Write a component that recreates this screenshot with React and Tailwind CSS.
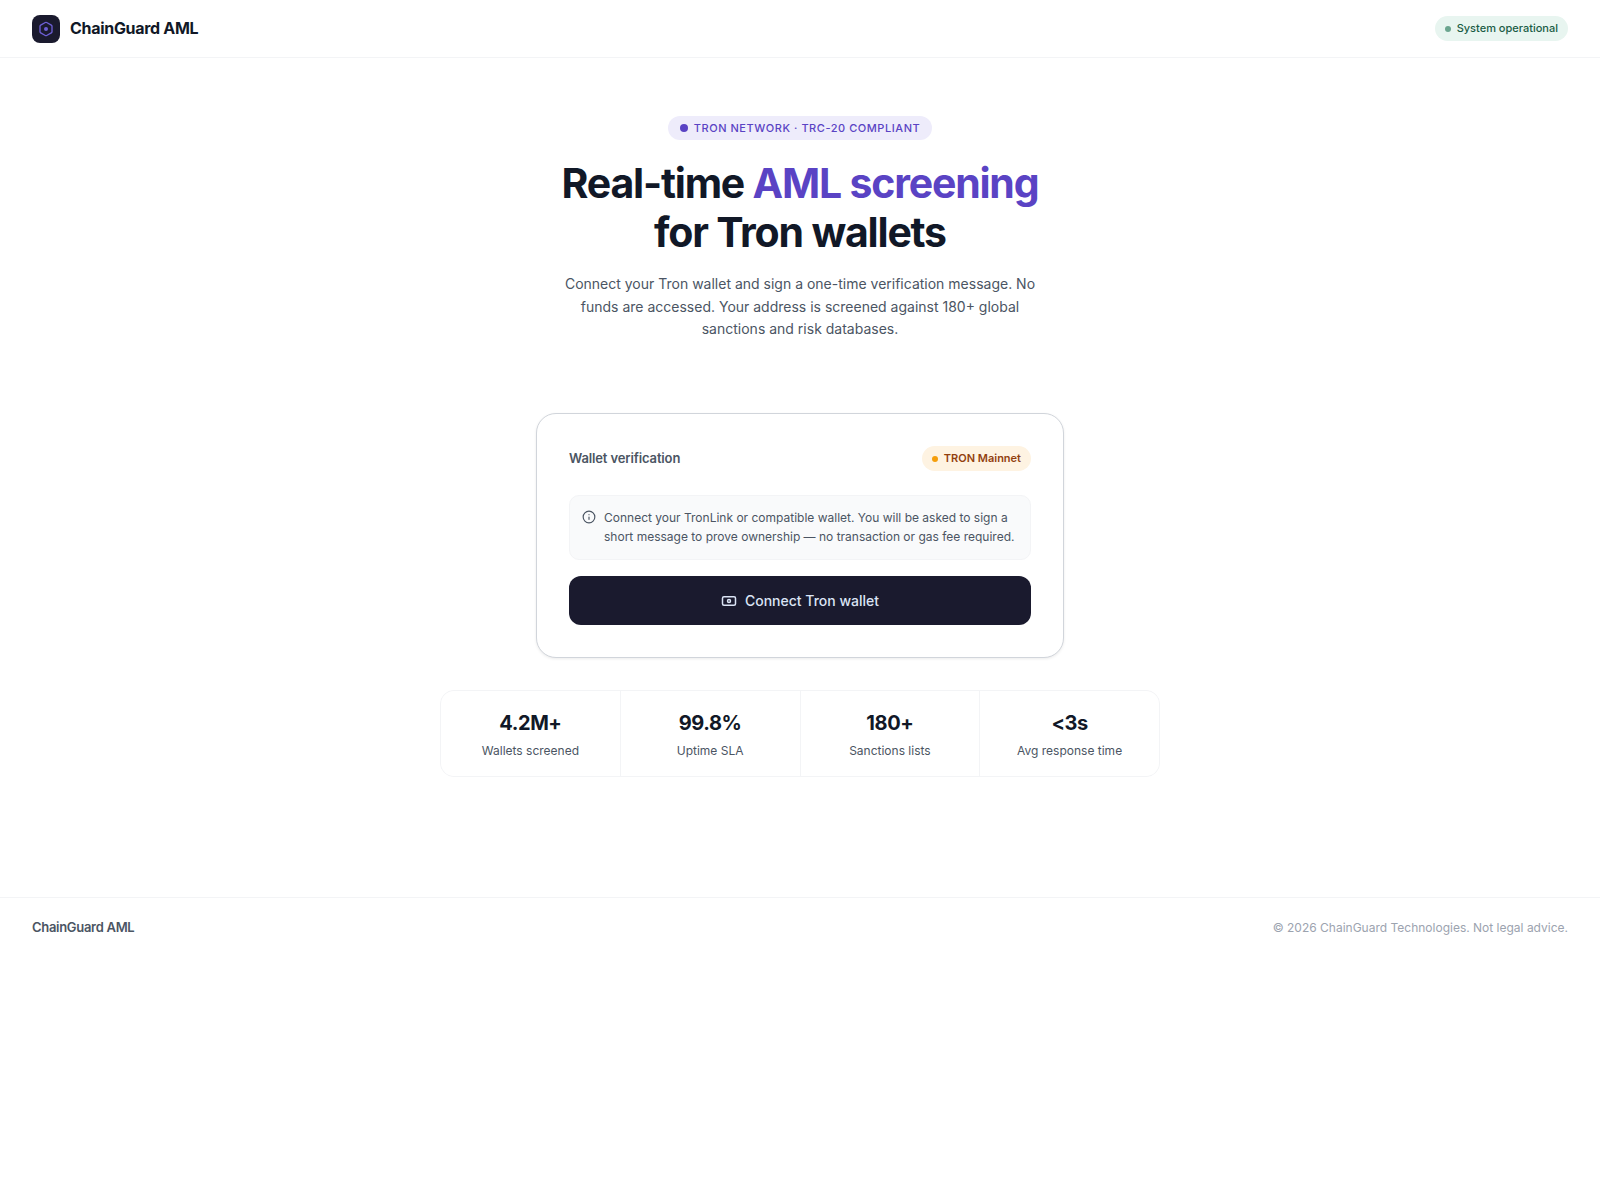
import { Info } from "lucide-react";

const STATS = [
  { value: "4.2M+", label: "Wallets screened" },
  { value: "99.8%", label: "Uptime SLA" },
  { value: "180+", label: "Sanctions lists" },
  { value: "<3s", label: "Avg response time" },
];

function LogoIcon() {
  return (
    <svg width="16" height="16" viewBox="0 0 24 24" fill="none" stroke="#6d5fd6" strokeWidth="2">
      <path d="M21 16V8a2 2 0 0 0-1-1.73l-7-4a2 2 0 0 0-2 0l-7 4A2 2 0 0 0 3 8v8a2 2 0 0 0 1 1.73l7 4a2 2 0 0 0 2 0l7-4A2 2 0 0 0 21 16z" />
      <circle cx="12" cy="12" r="3" fill="#6d5fd6" stroke="none" />
    </svg>
  );
}

function WalletIcon() {
  return (
    <svg width="16" height="16" viewBox="0 0 16 16" fill="none" stroke="currentColor" strokeWidth="1.5">
      <rect x="1.5" y="3.75" width="13" height="8.5" rx="1.5" />
      <circle cx="8" cy="8" r="1.5" />
    </svg>
  );
}

export default function App() {
  return (
    <div className="min-h-[1200px] bg-white font-['Inter',sans-serif] text-[#111827]">
      <header className="flex h-[58px] items-center justify-between border-b border-[#f3f4f6] px-8">
        <div className="flex items-center gap-[10px]">
          <div className="flex h-[28px] w-[28px] items-center justify-center rounded-lg bg-[#1a1a2e]">
            <LogoIcon />
          </div>
          <span className="mb-[2px] text-base font-bold tracking-[-0.3px] text-[#111827]">ChainGuard AML</span>
        </div>
        <div className="flex h-[25px] items-center gap-[6px] rounded-full bg-[#e8f5f0] px-[10px] text-[11px] font-medium text-[#1a5c45]">
          <span className="h-[6px] w-[6px] rounded-full bg-[#6ba58f]" />
          System operational
        </div>
      </header>

      <main className="flex flex-col items-center px-6 pb-[120px] pt-[58px]">
        <div className="flex h-[24px] items-center gap-[6px] rounded-full bg-[#eeecfb] px-3 text-[11px] font-medium tracking-[0.55px] text-[#5a43c4]">
          <span className="h-[8px] w-[8px] rounded-full bg-[#5a43c4]" />
          TRON NETWORK · TRC-20 COMPLIANT
        </div>

        <h1 className="mt-[19px] text-center text-[41px] font-bold leading-[49px] tracking-[-1.2px] text-[#111827]">
          Real-time <span className="text-[#5a43c4]">AML screening</span>
          <br />
          for Tron wallets
        </h1>

        <p className="mt-[16.2px] w-[480px] text-center text-sm leading-[22.4px] text-[#4b5563]">
          Connect your Tron wallet and sign a one-time verification message. No funds are accessed. Your address is screened against 180+ global sanctions and risk databases.
        </p>

        <section className="mt-[72.8px] w-[528px] rounded-[20px] border border-[#d1d5db] bg-white p-8 shadow-[0_1px_3px_rgba(0,0,0,0.08)]">
          <div className="flex items-center justify-between">
            <span className="text-[13px] font-semibold tracking-[-0.13px] text-[#4b5563]">Wallet verification</span>
            <div className="flex h-[25px] items-center gap-[6px] rounded-full bg-[#fef3e2] px-[10px] text-[11px] font-semibold text-[#92400e]">
              <span className="h-[6px] w-[6px] rounded-full bg-[#f59e0b]" />
              TRON Mainnet
            </div>
          </div>

          <div className="mt-6 flex gap-2 rounded-[10px] border border-[#f3f4f6] bg-[#f9fafb] px-3 py-3">
            <Info size={14} className="mt-[2px] shrink-0 text-[#4b5563]" />
            <p className="text-[12px] leading-[19.2px] text-[#4b5563]">
              Connect your TronLink or compatible wallet. You will be asked to sign a short message to prove ownership — no transaction or gas fee required.
            </p>
          </div>

          <button className="mt-4 flex h-[49px] w-full items-center justify-center gap-2 rounded-xl bg-[#1a1a2e] pt-px text-sm font-medium text-[#dbe4f5]">
            <WalletIcon />
            Connect Tron wallet
          </button>
        </section>

        <section className="mt-8 grid w-[720px] grid-cols-4 gap-px overflow-hidden rounded-[14px] border border-[#f3f4f6] bg-[#f3f4f6]">
          {STATS.map((stat) => (
            <div key={stat.label} className="flex h-[85px] flex-col items-center bg-white pt-[17px]">
              <span className="text-[20px] font-bold leading-[30px] tracking-[-0.4px] text-[#111827]">{stat.value}</span>
              <span className="mt-[4px] text-[12px] leading-[18px] text-[#4b5563]">{stat.label}</span>
            </div>
          ))}
        </section>
      </main>

      <footer className="flex h-[62px] items-center justify-between border-t border-[#f3f4f6] px-8">
        <span className="text-[13px] font-semibold tracking-[-0.3px] text-[#4b5563]">ChainGuard AML</span>
        <span className="text-[12px] text-[#9ca3af]">© 2026 ChainGuard Technologies. Not legal advice.</span>
      </footer>
    </div>
  );
}
